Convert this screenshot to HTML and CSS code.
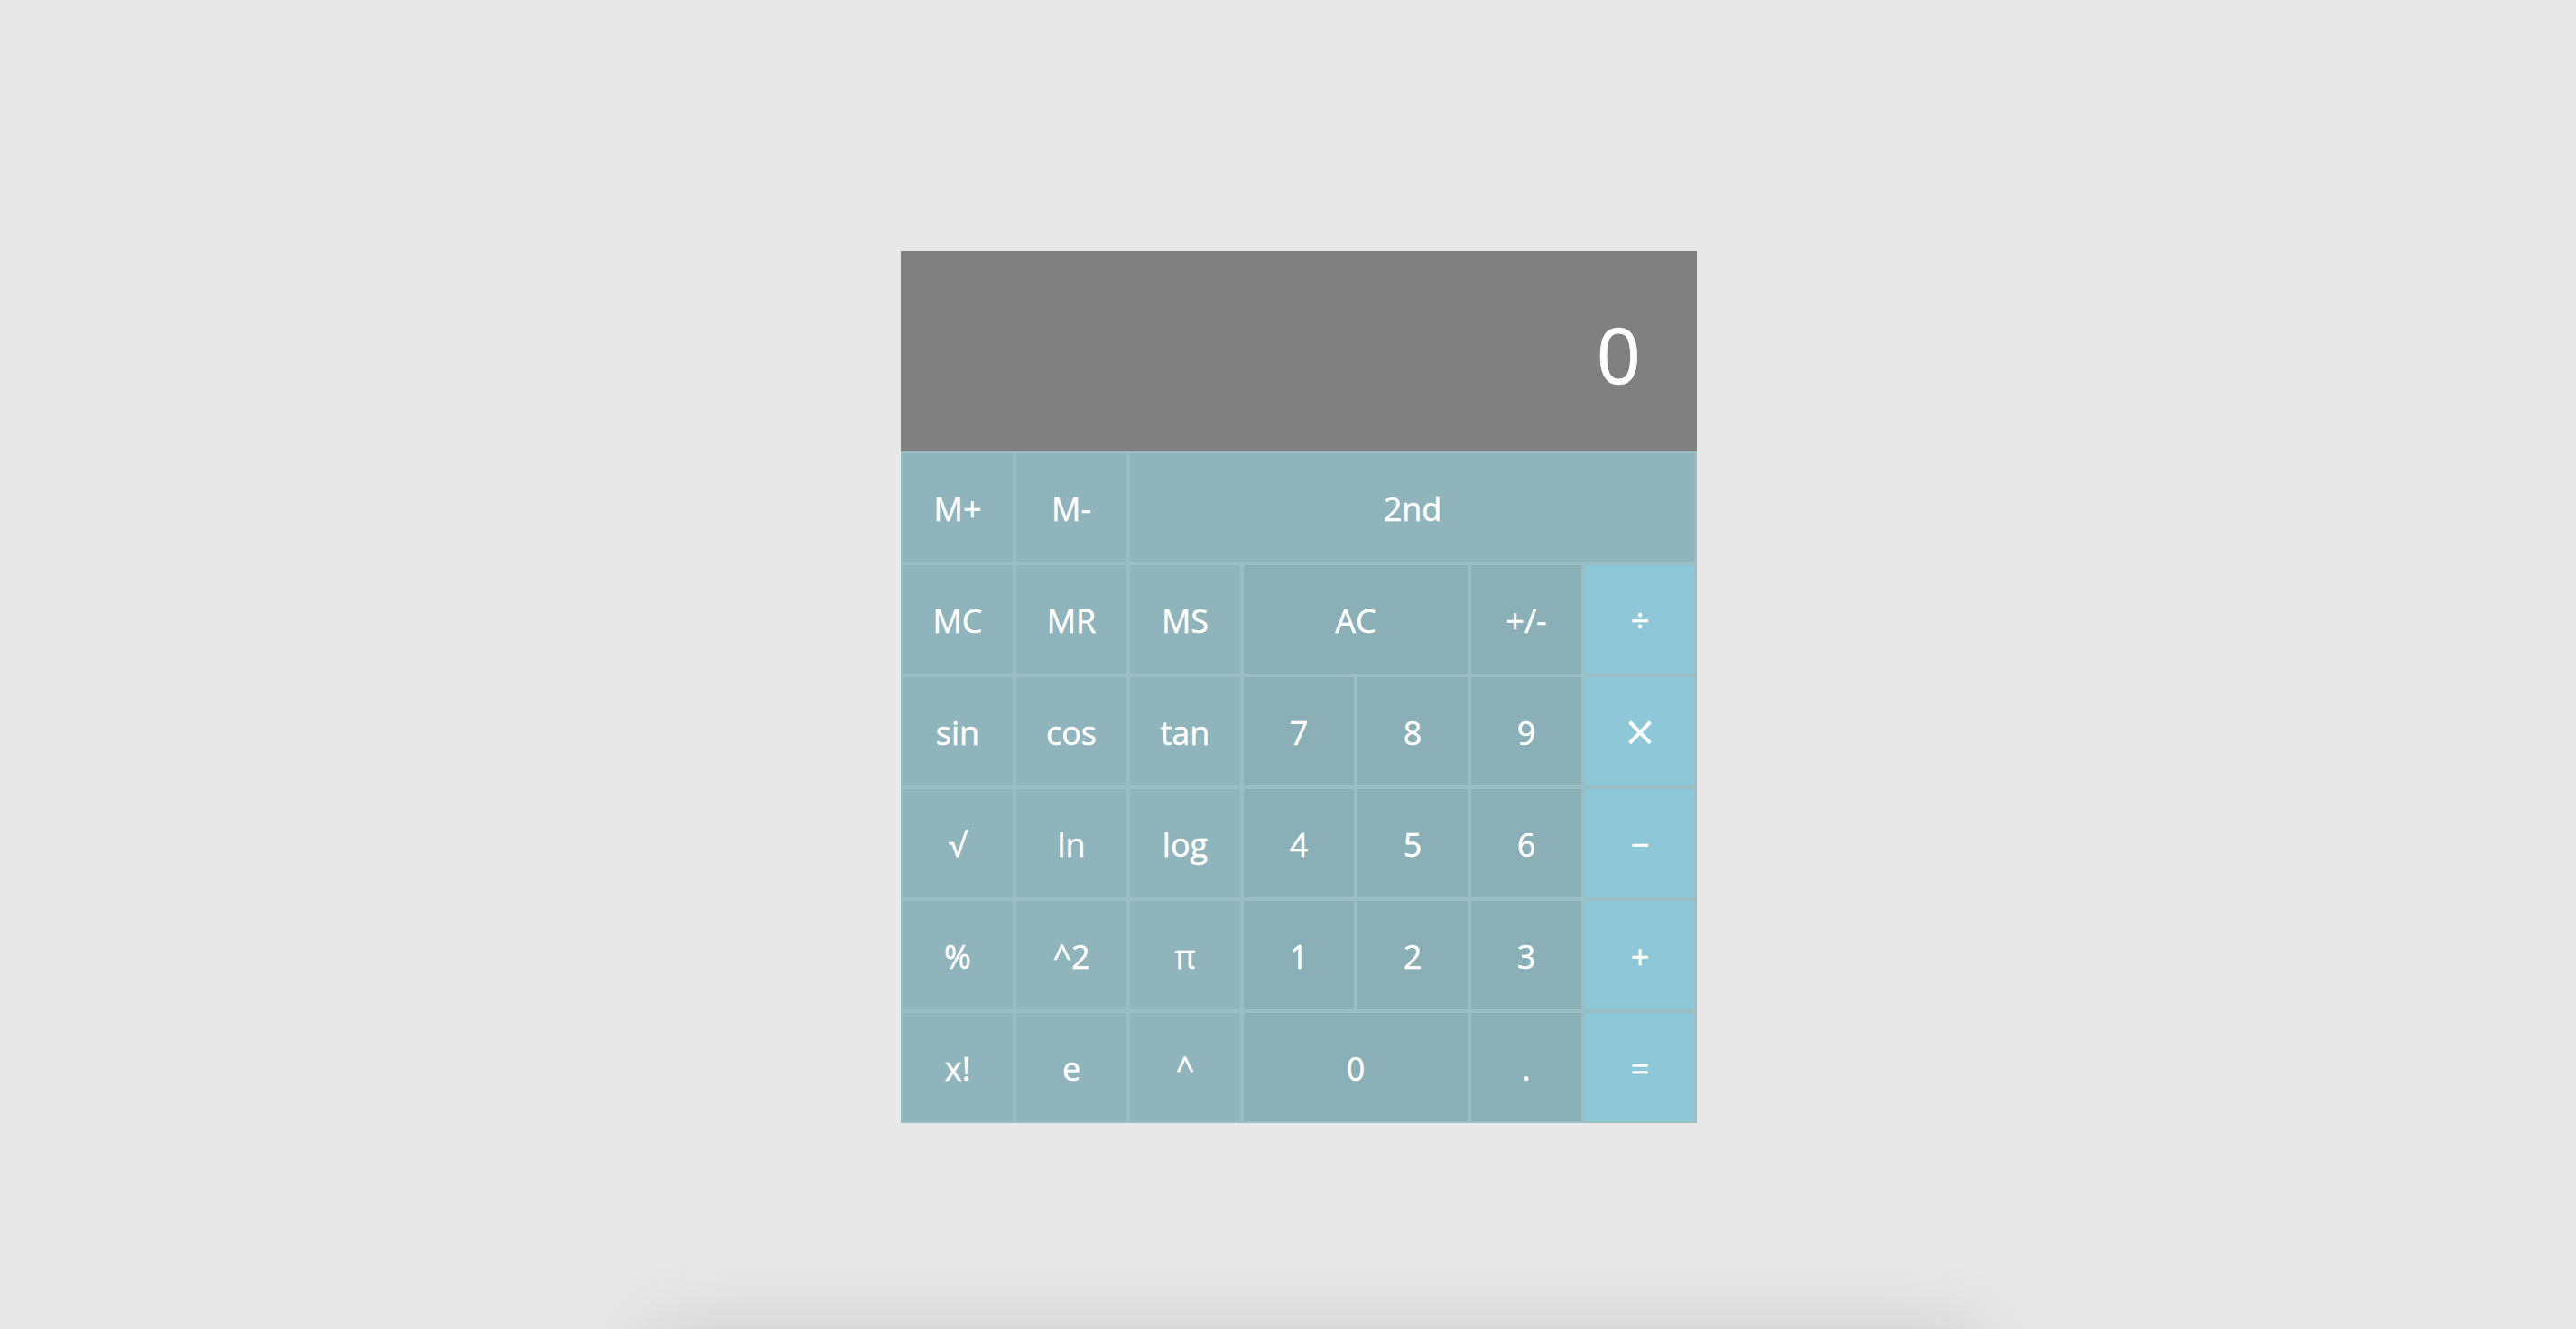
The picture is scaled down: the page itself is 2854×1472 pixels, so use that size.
FILE: index.html
```html
<!DOCTYPE html>
<html>
<head>
<meta charset="utf-8">
<link rel="stylesheet" href="styles.css">
</head>
<body>
<div class="calc">
  <div class="display">0</div>
  <div class="keys">
    <div class="key fn">M+</div>
    <div class="key fn">M-</div>
    <div class="key fn span5">2nd</div>

    <div class="key fn">MC</div>
    <div class="key fn">MR</div>
    <div class="key fn">MS</div>
    <div class="key num span2">AC</div>
    <div class="key num">+/-</div>
    <div class="key op">÷</div>

    <div class="key fn">sin</div>
    <div class="key fn">cos</div>
    <div class="key fn">tan</div>
    <div class="key num">7</div>
    <div class="key num">8</div>
    <div class="key num">9</div>
    <div class="key op times">×</div>

    <div class="key fn">√</div>
    <div class="key fn">ln</div>
    <div class="key fn">log</div>
    <div class="key num">4</div>
    <div class="key num">5</div>
    <div class="key num">6</div>
    <div class="key op">−</div>

    <div class="key fn">%</div>
    <div class="key fn">^2</div>
    <div class="key fn">π</div>
    <div class="key num">1</div>
    <div class="key num">2</div>
    <div class="key num">3</div>
    <div class="key op">+</div>

    <div class="key fn">x!</div>
    <div class="key fn">e</div>
    <div class="key fn">^</div>
    <div class="key num span2">0</div>
    <div class="key num">.</div>
    <div class="key op">=</div>
  </div>
</div>
<div class="floor-shadow"></div>
</body>
</html>
```
FILE: styles.css
```css
html, body {
  margin: 0;
  padding: 0;
  height: 100%;
  overflow: hidden;
}
body {
  background: #e8e8e8;
  font-family: "Open Sans", "DejaVu Sans", sans-serif;
  color: #ffffff;
}
.calc {
  width: 882px;
  margin: 278px 0 0 998px;
}
.display {
  height: 222px;
  background: #808080;
  box-sizing: border-box;
  padding-right: 62px;
  padding-top: 6px;
  display: flex;
  align-items: center;
  justify-content: flex-end;
  font-size: 86px;
  line-height: 1;
  -webkit-text-stroke: 0.6px #ffffff;
}
.keys {
  display: grid;
  grid-template-columns: repeat(7, 126px);
  grid-auto-rows: 124px;
}
.key {
  box-sizing: border-box;
  border: 2px solid #9bbec5;
  padding-top: 3px;
  display: flex;
  align-items: center;
  justify-content: center;
  font-size: 36px;
  line-height: 1;
  -webkit-text-stroke: 0.4px #ffffff;
}
.fn { background: #90b4bc; }
.num { background: #8aafb6; }
.op { background: #8ec8d8; }
.times {
  font-size: 58px;
  padding-top: 0;
  -webkit-text-stroke: 0;
}
.span2 { grid-column: span 2; }
.span5 { grid-column: span 5; }
.floor-shadow {
  position: fixed;
  left: 730px;
  width: 1450px;
  top: 1492px;
  height: 200px;
  background: #d8d8d8;
  box-shadow: 0 0 90px 10px rgba(0, 0, 0, 0.16);
}
```
